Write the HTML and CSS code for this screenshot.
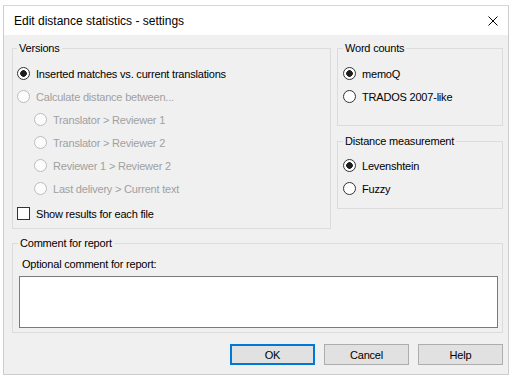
FILE: index.html
```html
<!DOCTYPE html>
<html>
<head>
<meta charset="utf-8">
<link rel="stylesheet" href="styles.css">
</head>
<body>
<div class="window">
  <div class="titlebar">
    <span class="title">Edit distance statistics - settings</span>
    <svg class="close" width="10" height="10" viewBox="0 0 10 10"><path d="M0.5 0.5 L9.5 9.5 M9.5 0.5 L0.5 9.5" stroke="#000" stroke-width="1" fill="none"/></svg>
  </div>
  <div class="body">
    <div class="toprow">
      <fieldset class="group versions">
        <legend>Versions</legend>
        <div class="row"><span class="radio checked"></span><span>Inserted matches vs. current translations</span></div>
        <div class="row disabled"><span class="radio"></span><span>Calculate distance between...</span></div>
        <div class="row disabled sub"><span class="radio"></span><span>Translator &gt; Reviewer 1</span></div>
        <div class="row disabled sub"><span class="radio"></span><span>Translator &gt; Reviewer 2</span></div>
        <div class="row disabled sub"><span class="radio"></span><span>Reviewer 1 &gt; Reviewer 2</span></div>
        <div class="row disabled sub"><span class="radio"></span><span>Last delivery &gt; Current text</span></div>
        <div class="row checkrow"><span class="check"></span><span>Show results for each file</span></div>
      </fieldset>
      <div class="rightcol">
        <fieldset class="group words">
          <legend>Word counts</legend>
          <div class="row"><span class="radio checked"></span><span>memoQ</span></div>
          <div class="row"><span class="radio"></span><span>TRADOS 2007-like</span></div>
        </fieldset>
        <fieldset class="group distance">
          <legend>Distance measurement</legend>
          <div class="row"><span class="radio checked"></span><span>Levenshtein</span></div>
          <div class="row"><span class="radio"></span><span>Fuzzy</span></div>
        </fieldset>
      </div>
    </div>
    <fieldset class="group comment">
      <legend>Comment for report</legend>
      <div class="commentlabel">Optional comment for report:</div>
      <div class="textbox"></div>
    </fieldset>
    <div class="buttons">
      <div class="btn default">OK</div>
      <div class="btn">Cancel</div>
      <div class="btn">Help</div>
    </div>
  </div>
</div>
</body>
</html>
```
FILE: styles.css
```css
html, body {
  margin: 0;
  padding: 0;
  background: #ffffff;
}
body {
  font-family: "Liberation Sans", Arial, sans-serif;
  font-size: 11px;
  letter-spacing: -0.2px;
  color: #000;
}
.window {
  margin: 5px 0 0 3px;
  width: 504px;
  height: 368px;
  border: 1px solid #cccccc;
  border-top-color: #d6d6d6;
  display: flex;
  flex-direction: column;
  background: #f0f0f0;
}
.titlebar {
  height: 29px;
  background: #ffffff;
  display: flex;
  align-items: center;
  justify-content: space-between;
  padding: 0 10px 0 10px;
  flex: none;
}
.title {
  font-size: 12px;
  letter-spacing: 0;
  color: #000;
}
.close {
  display: block;
}
.body {
  flex: 1;
  display: flex;
  flex-direction: column;
  padding: 5px 5px 0 8px;
}
.toprow {
  display: flex;
  align-items: flex-start;
  gap: 6px;
}
.group {
  margin: 0;
  min-width: 0;
  border: 1px solid #dcdcdc;
}
.group legend {
  padding: 0 2px;
  line-height: 17px;
  height: 17px;
}
.versions {
  width: 319px;
  box-sizing: border-box;
  padding: 5px 4px 3px 4px;
}
.rightcol {
  width: 166px;
  display: flex;
  flex-direction: column;
}
.words {
  padding: 5px 5px 17px 5px;
}
.distance {
  margin-top: 7px;
  padding: 4px 5px 8px 5px;
}
.row {
  display: flex;
  align-items: center;
  gap: 6px;
  height: 23px;
}
.row.sub {
  padding-left: 17px;
}
.row.disabled {
  color: #a0a0a0;
}
.checkrow {
  margin-top: 2px;
}
.radio {
  width: 13px;
  height: 13px;
  box-sizing: border-box;
  border: 1px solid #333333;
  border-radius: 50%;
  background: #ffffff;
  flex: none;
}
.radio.checked {
  background: radial-gradient(circle, #1e1e1e 0 3px, #ffffff 3.6px);
}
.disabled .radio {
  border-color: #bcbcbc;
  background: #fcfcfc;
}
.check {
  width: 13px;
  height: 13px;
  box-sizing: border-box;
  border: 1px solid #333333;
  background: #ffffff;
  flex: none;
}
.comment {
  margin-top: 6px;
  padding: 5px 4px 4px 6px;
}
.comment legend {
  margin-left: -1px;
}
.commentlabel {
  line-height: 14px;
  padding-left: 3px;
}
.textbox {
  margin-top: 5px;
  height: 52px;
  box-sizing: border-box;
  border: 1px solid #7a7a7a;
  background: #ffffff;
}
.buttons {
  margin-top: 11px;
  display: flex;
  justify-content: flex-end;
  gap: 9px;
}
.btn {
  width: 85px;
  height: 21px;
  box-sizing: border-box;
  border: 1px solid #adadad;
  background: #e1e1e1;
  display: flex;
  align-items: center;
  justify-content: center;
}
.btn.default {
  border: 2px solid #0078d7;
}
```
